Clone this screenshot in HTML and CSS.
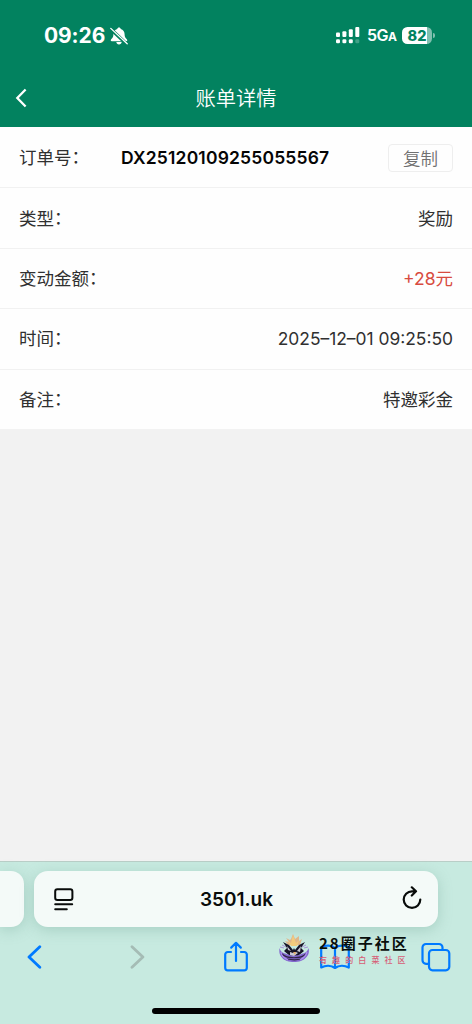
FILE: index.html
```html
<!DOCTYPE html>
<html lang="zh-CN">
<head>
<meta charset="utf-8">
<meta name="viewport" content="width=device-width">
<title>账单详情</title>
<link rel="stylesheet" href="styles.css">
</head>
<body>
<div class="screen">
  <header class="header">
    <div class="status">
      <div class="clock"><span class="time">09:26</span>
        <svg class="bell" width="18" height="18" viewBox="0 0 18 18"><path d="M9 .6c-.9 0-1.600.6-1.700 1.400C4.800 2.700 3.400 4.600 3.400 7.200c0 2.700-.8 3.700-2.200 5-.9.900-.5 2 .6 2h14.400c1.100 0 1.500-1.100.6-2-1.400-1.300-2.200-2.300-2.200-5 0-2.600-1.400-4.500-3.900-5.200C10.600 1.200 9.900.6 9 .6zM6.300 15c.2 1.500 1.200 2.400 2.700 2.400s2.500-.9 2.700-2.400z" fill="#fff"/><path d="M.2 1.500l17 16" stroke="#02825f" stroke-width="3.400"/><path d="M.8 1.400l16.400 15.400" stroke="#fff" stroke-width="1.300" stroke-linecap="round"/></svg>
      </div>
      <div class="indicators">
        <svg class="signal" width="24" height="17" viewBox="0 0 24 17" fill="#fff"><rect x="0" y="5.500" width="4" height="4.500" rx="1"/><rect x="6.400" y="4.200" width="4" height="5.800" rx="1"/><rect x="12.800" y="2.200" width="4" height="7.800" rx="1"/><rect x="19.300" y="0" width="4" height="10" rx="1"/><rect x="0" y="12.200" width="4" height="4" rx="1.300"/><rect x="6.400" y="12.200" width="4" height="4" rx="1.300"/><rect x="12.800" y="12.200" width="4" height="4" rx="1.300"/><rect x="19.300" y="12.200" width="4" height="4" rx="1.300" opacity=".25"/></svg>
        <span class="network">5G<small>A</small></span>
        <span class="battery">82</span><span class="battery-tip"></span>
      </div>
    </div>
    <div class="nav">
      <svg width="12" height="20" viewBox="0 0 12 20" fill="none" stroke="#fff" stroke-width="2.300"><path d="M10.600 1.500L2.300 10l8.300 8.500"/></svg>
      <h1 class="title">账单详情</h1>
    </div>
  </header>
  <main class="details">
    <div class="row"><span class="label">订单号<span class="colon">：</span></span><strong class="order">DX25120109255055567</strong><button class="copy">复制</button></div>
    <div class="row"><span class="label">类型<span class="colon">：</span></span><span class="value">奖励</span></div>
    <div class="row"><span class="label">变动金额<span class="colon">：</span></span><span class="value amount">+28元</span></div>
    <div class="row"><span class="label">时间<span class="colon">：</span></span><span class="value date">2025–12–01 09:25:50</span></div>
    <div class="row"><span class="label">备注<span class="colon">：</span></span><span class="value">特邀彩金</span></div>
  </main>
  <footer class="browser">
    <div class="tabs">
      <div class="previous-tab"></div>
      <div class="address">
        <svg width="20" height="23" viewBox="0 0 20 23" fill="none" stroke="#080b0a" stroke-width="2" stroke-linecap="round"><rect x="1.200" y="1.200" width="17.200" height="10.800" rx="2.200"/><path d="M1.200 16.300h17M1.200 21.300h11.600"/></svg>
        <span class="url">3501.uk</span>
        <svg class="reload" width="20" height="23" viewBox="0 0 20 23" fill="none" stroke="#080b0a" stroke-width="2.200" stroke-linecap="round" stroke-linejoin="round"><path d="M13.800 5.300H10a8.300 8.300 0 1 0 8.300 8.300M9.800 1.300l4.200 4-4.200 4.200"/></svg>
      </div>
    </div>
    <div class="toolbar">
      <svg class="back" width="16" height="24" viewBox="0 0 16 24" fill="none" stroke="#007aff" stroke-width="2.800" stroke-linecap="round" stroke-linejoin="round"><path d="M13.800 1.700L3 12l10.800 10.300"/></svg>
      <svg class="forward" width="16" height="24" viewBox="0 0 16 24" fill="none" stroke="#a5bcb5" stroke-width="2.800" stroke-linecap="round" stroke-linejoin="round"><path d="M2 1.700L12.900 12 2 22.300"/></svg>
      <svg class="share" width="26" height="32" viewBox="0 0 26 32" fill="none" stroke="#007aff" stroke-width="2.200" stroke-linecap="round" stroke-linejoin="round"><path d="M8 11H4.800A2.600 2.600 0 0 0 2.200 13.600v13.200a2.600 2.600 0 0 0 2.600 2.600h16.400a2.600 2.600 0 0 0 2.600-2.600V13.600a2.600 2.600 0 0 0-2.600-2.600H18M13 20V2M8.200 6.600L13 1.800l4.800 4.800"/></svg>
      <div class="bookmarks">
        <svg width="30" height="26" viewBox="0 0 30 26" fill="none" stroke="#007aff" stroke-width="2.200" stroke-linejoin="round"><path d="M15 4C11.800 1 5.500 1 1.200 3v20.500c4.300-2.200 10-2.200 13.800.5 3.800-2.700 9.500-2.700 13.800-.5V3C24.500 1 18.200 1 15 4zm0 0v20"/></svg>
        <div class="community">
          <svg width="30" height="29" viewBox="0 0 30 29"><path d="M7 4l4 2 1-1 2-5 2 5 4-3v5l3-2-2 6H9L6 7l4 1z" fill="#e0b68a"/><path d="M12 9l2-8 3 8 3-3-2 6h-6L9 7z" fill="#f3cb7d"/><path d="M1 13l4 1M29 13l-4 1M3 11l4 2M27 11l-4 2" stroke="#a992d8"/><path d="M4 8l6 3 4 5 1-2 1 2 4-5 6-3-4 6 3 3-6 5h-8l-6-5 3-3z" fill="#171427"/><path d="M.5 14c1 4 4 5 7 6 5 2 10 2 15 0 3-1 6-2 7-6 1 4 0 7-2 9-3 4-8 5-12.500 5S5 27 2.500 23C.5 21 0 18 .5 14z" fill="#8267ce"/><path d="M3 20c5 5 19 5 24 0M8 25c5 1 10 1 14 0" fill="none" stroke="#302544" stroke-width="1.200"/><path d="M8 12l4 5-3-1zM22 12l-4 5 3 1zM11 18l3 1 3-1 2 1-4 3-4-1z" fill="#c9c9d6"/><path d="M14 18h3l-1 3z" fill="#e6ac67"/><path d="M2 18c0 3 3 6 7 8M28 18c-1 4-3 6-7 8" fill="none" stroke="#ad91ef" stroke-width="1.200"/></svg>
          <div class="community-copy"><b>28圈子社区</b><span>有趣的白菜社区</span></div>
        </div>
      </div>
      <svg class="windows" width="30" height="30" viewBox="0 0 30 30" fill="none" stroke="#007aff" stroke-width="2.200"><path d="M8 21.800H5a3.500 3.500 0 0 1-3.500-3.500V5.500A3.500 3.500 0 0 1 5 2h13a3.500 3.500 0 0 1 3.500 3.500V8"/><rect x="8" y="8" width="20.300" height="20.300" rx="3.500"/></svg>
    </div>
    <div class="home-indicator"></div>
  </footer>
</div>
</body>
</html>
```
FILE: styles.css
```css
* { box-sizing: border-box; }
body { margin: 0; font-family: Inter, "Noto Sans CJK SC", sans-serif; color: #303030; }
svg { display: block; flex: none; }
.screen { width: 472px; height: 1024px; display: flex; flex-direction: column; background: #f2f2f2; overflow: hidden; }
.header { height: 127px; background: #02825f; color: #fff; flex: none; }
.status { height: 70px; padding: 1px 38px 0 44px; display: flex; align-items: center; justify-content: space-between; }
.clock, .indicators { display: flex; align-items: center; }
.time { font-size: 21px; font-weight: 700; line-height: 24px; letter-spacing: -.1px; }
.bell { margin-left: 5px; }
.indicators { margin-right: -1px; }
.signal { margin-right: 0; }
.network { margin-left: 7px; width: 29px; font: 600 16px/18px Inter, sans-serif; letter-spacing: -.5px; white-space: nowrap; }
.network small { font-size: 12px; font-weight: 700; }
.battery { width: 30px; height: 17px; margin-left: 6px; border-radius: 5.500px; background: linear-gradient(90deg, #fff 25px, #80c0af 25px); color: #02825f; font-size: 14.500px; font-weight: 800; line-height: 17px; text-align: center; }
.battery-tip { width: 2px; height: 5px; margin-left: 1px; border-radius: 0 2px 2px 0; background: #80c0af; }
.nav { height: 57px; padding: 0 15px; display: grid; grid-template-columns: 12px 1fr 12px; align-items: center; }
.nav svg { margin-top: -1px; }
.title { margin: 1px 0 0; text-align: center; font-size: 20.300px; font-weight: 350; line-height: 28px; }
.details { height: 302px; padding-top: 1px; flex: none; background: #fefefe; }
.row { height: 60.400px; padding: 1px 19px 0; display: flex; align-items: center; border-bottom: 1px solid #f1f1f1; font-size: 17.500px; font-weight: 400; line-height: 26px; white-space: nowrap; }
.row:last-child { border-bottom: 0; height: 59.400px; }
.label { display: flex; margin-right: auto; }
.colon { width: 17.500px; line-height: 24px; }
.order { width: 208px; margin: 0 59px 0 0; color: #050505; font-size: 17.500px; font-weight: 600; letter-spacing: .170px; }
.copy { width: 65px; height: 28px; padding: 0; border: 1px solid #eee; border-radius: 4px; background: #fefefe; color: #707070; font: 350 17.500px/24px "Noto Sans CJK SC", sans-serif; }
.date { font-size: 17.400px; }
.amount { color: #d84b40; }
.browser { height: 163px; margin-top: auto; border-top: 1px solid #b9cec7; background: #c7eae0; }
.tabs { height: 65px; padding-top: 9px; display: flex; gap: 10px; }
.previous-tab { width: 24px; height: 56px; border-radius: 0 13px 13px 0; background: #f4faf8; box-shadow: 0 3px 14px #71a59460; }
.address { width: 404px; height: 56px; padding: 0 16px 0 20px; display: flex; align-items: center; justify-content: space-between; border-radius: 14px; background: #f4faf8; box-shadow: 0 3px 14px #71a59460; }
.reload { margin-top: -4px; }
.url { color: #090c0b; font-size: 19px; font-weight: 600; line-height: 24px; padding-top: 1px; margin-right: 3px; }
.toolbar { height: 60px; padding: 0 21px 0 26px; display: flex; align-items: center; }
.forward { margin-left: 88px; }
.share { margin-left: 77px; margin-top: -1px; }
.bookmarks { position: relative; margin-left: 71px; }
.windows { margin-left: auto; }
.community { position: absolute; left: -41px; top: -10px; display: flex; align-items: flex-start; gap: 10px; }
.community-copy { display: flex; flex-direction: column; white-space: nowrap; font-family: "Noto Sans CJK SC", sans-serif; }
.community-copy b { color: #080e0c; font-size: 15px; line-height: 17px; font-weight: 700; letter-spacing: 2px; }
.community-copy span { color: #d75d76; font-size: 8px; line-height: 17px; font-weight: 500; letter-spacing: 5.100px; }
.home-indicator { width: 168px; height: 6px; margin: 21px auto 0; border-radius: 3px; background: #000; }
```
